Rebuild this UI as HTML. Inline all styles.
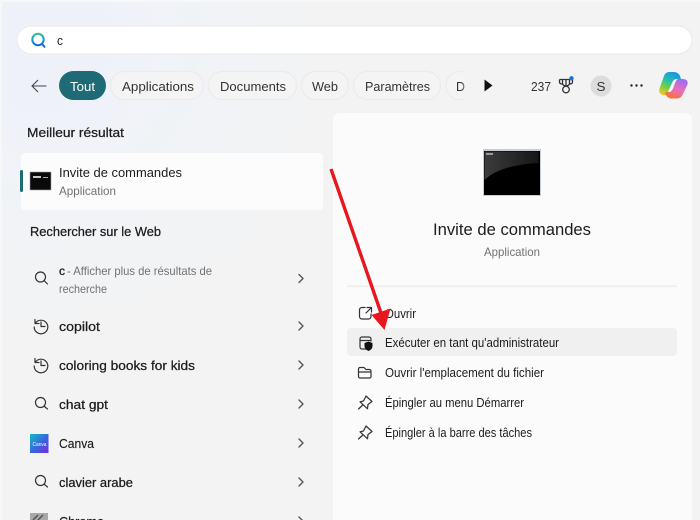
<!DOCTYPE html>
<html lang="fr">
<head>
<meta charset="utf-8">
<title>Recherche</title>
<style>
html,body{margin:0;padding:0;background:#f3f3f3;overflow:hidden;}
svg{display:block;width:700px;height:520px;filter:blur(.3px);}
text{font-family:"Liberation Sans",sans-serif;fill:#1c1c1c;}
.s{font-size:13px;}
.g{font-size:12px;fill:#727272;}
.b{font-size:13px;stroke:#1c1c1c;stroke-width:.25px;}
.i{fill:none;stroke:#333;stroke-width:1.2;stroke-linecap:round;stroke-linejoin:round;}
.c{fill:none;stroke:#555;stroke-width:1.4;stroke-linecap:round;stroke-linejoin:round;}
.p{fill:#f4f4f4;stroke:#ebebeb;stroke-width:1.2;}
</style>
</head>
<body>
<svg xmlns="http://www.w3.org/2000/svg" width="700" height="520" viewBox="0 0 700 520">
<defs>
<radialGradient id="bg" gradientUnits="userSpaceOnUse" cx="40" cy="40" r="300"><stop offset="0" stop-color="#edf2f9"/><stop offset=".6" stop-color="#f1f3f6"/><stop offset="1" stop-color="#f3f3f3"/></radialGradient>
<linearGradient id="q" x1="0" y1="0" x2="0" y2="1"><stop offset="0" stop-color="#2cc08a"/><stop offset=".5" stop-color="#1a9bd8"/><stop offset="1" stop-color="#0f6fd8"/></linearGradient>
<linearGradient id="cv" x1="0" y1="0" x2="1" y2="1"><stop offset="0" stop-color="#12bcc4"/><stop offset=".55" stop-color="#3a63e0"/><stop offset="1" stop-color="#7a2be0"/></linearGradient>
<linearGradient id="fade" x1="0" y1="0" x2="1" y2="0"><stop offset="0" stop-color="#f3f3f3" stop-opacity="0"/><stop offset="1" stop-color="#f3f3f3"/></linearGradient>
<linearGradient id="co1" x1=".7" y1="0" x2=".2" y2="1"><stop offset="0" stop-color="#1f8fe8"/><stop offset=".4" stop-color="#22c0b0"/><stop offset=".7" stop-color="#7fd03c"/><stop offset="1" stop-color="#f7c52b"/></linearGradient>
<linearGradient id="co2" x1=".7" y1="0" x2=".3" y2="1"><stop offset="0" stop-color="#9a6cf0"/><stop offset=".5" stop-color="#ea6cc0"/><stop offset="1" stop-color="#f8742f"/></linearGradient>
<linearGradient id="gl" x1="0" y1="0" x2="1" y2="0"><stop offset="0" stop-color="#3c3c3c"/><stop offset="1" stop-color="#161616"/></linearGradient>
</defs>

<rect width="700" height="520" fill="#f3f3f3"/>
<rect width="700" height="520" fill="url(#bg)"/>
<rect width="700" height="2" fill="#f8f8f8"/>
<rect width="2" height="520" fill="#f7f7f7"/>

<!-- search box -->
<rect x="17" y="26" width="675" height="28" rx="14" fill="#fff" stroke="#e9e9e9"/>
<circle cx="38" cy="39.500" r="5.700" fill="none" stroke="url(#q)" stroke-width="2"/>
<path d="M42 44 L44.500 46.800" stroke="#0f6fd8" stroke-width="2" stroke-linecap="round"/>
<text x="57" y="45" font-size="13" textLength="6" lengthAdjust="spacingAndGlyphs">c</text>

<!-- filter row -->
<path d="M46.500 86 H32 M38 80 L32 86 L38 92" fill="none" stroke="#444" stroke-width="1.100"/>
<rect x="59" y="71" width="47" height="29" rx="14.500" fill="#1f6b75"/>
<text x="70" y="91" class="s" style="fill:#fff" textLength="25" lengthAdjust="spacingAndGlyphs">Tout</text>
<rect x="110.500" y="71.500" width="93" height="28" rx="14" class="p"/>
<text x="122" y="91" class="s" style="fill:#333" textLength="72" lengthAdjust="spacingAndGlyphs">Applications</text>
<rect x="208.500" y="71.500" width="88" height="28" rx="14" class="p"/>
<text x="220" y="91" class="s" style="fill:#333" textLength="66" lengthAdjust="spacingAndGlyphs">Documents</text>
<rect x="301.500" y="71.500" width="47" height="28" rx="14" class="p"/>
<text x="312" y="91" class="s" style="fill:#333" textLength="26" lengthAdjust="spacingAndGlyphs">Web</text>
<rect x="353.500" y="71.500" width="87" height="28" rx="14" class="p"/>
<text x="365" y="91" class="s" style="fill:#333" textLength="65" lengthAdjust="spacingAndGlyphs">Paramètres</text>
<path d="M465 71.500 H460 A14 14 0 0 0 460 99.500 H465" class="p"/>
<text x="456" y="91" class="s" style="fill:#333" textLength="9" lengthAdjust="spacingAndGlyphs">D</text>
<rect x="462" y="70" width="6" height="31" fill="url(#fade)"/>
<path d="M484.500 79.500 L492.500 85.500 L484.500 91.500 Z" fill="#111"/>
<text x="531" y="91" font-size="12.500" style="fill:#333" textLength="20" lengthAdjust="spacingAndGlyphs">237</text>
<!-- trophy -->
<path d="M559.500 79.500 H572 M562.500 79.500 V83 Q562.500 85.800 566 85.800 Q569.500 85.800 569.500 83 V79.500 M566 80 V85 M559.500 79.500 V82 Q559.500 84 562.500 84 M572.500 80 V82 Q572.500 84 569.500 84" fill="none" stroke="#333" stroke-width="1.300"/>
<circle cx="566" cy="89.500" r="3.300" fill="none" stroke="#333" stroke-width="1.300"/>
<circle cx="571.500" cy="78.300" r="2.200" fill="#1a73d8"/>
<circle cx="601" cy="86" r="10.500" fill="#dcdcdc"/>
<text x="596.500" y="91" font-size="13" style="fill:#333" textLength="9" lengthAdjust="spacingAndGlyphs">S</text>
<circle cx="631.500" cy="85.500" r="1.200" fill="#222"/><circle cx="636.500" cy="85.500" r="1.200" fill="#222"/><circle cx="641.500" cy="85.500" r="1.200" fill="#222"/>
<!-- copilot logo -->
<path d="M669 72 H674 Q678 72 680 76 L681 79 H677 Q673.500 79 672 83 L667.500 93 Q666 96 662.500 95 Q658 93.500 659.500 88.500 L664 76 Q665.500 72 669 72 Z" fill="url(#co1)"/>
<path d="M678 79 H683 Q688.500 79.500 687.500 84.500 L683 94 Q681 99 676 98.500 H671 Q667 98 665.500 94 L665 92 H669 Q671.500 92 673 88.500 L675.500 82 Q676.500 79.500 678 79 Z" fill="url(#co2)"/>
<path d="M675.500 80 Q673 81 672 84 L668.500 92 Q670.500 92 672 89 L675 82 Z" fill="#fff"/>

<!-- left column -->
<text x="27" y="137" class="b" textLength="97" lengthAdjust="spacingAndGlyphs">Meilleur résultat</text>
<rect x="21" y="153" width="302" height="57" rx="4" fill="#fcfcfc"/>
<rect x="20" y="170" width="3" height="22" rx="1.500" fill="#1f6b75"/>
<rect x="30" y="172" width="21" height="18" fill="#0a0a0a" stroke="#9aa0a8" stroke-width=".6"/>
<rect x="33" y="176" width="8" height="2" fill="#c8c8c8"/>
<rect x="43" y="177" width="5" height="1" fill="#aaa"/>
<text x="59" y="177" class="s" textLength="123" lengthAdjust="spacingAndGlyphs">Invite de commandes</text>
<text x="59" y="195" class="g" textLength="57" lengthAdjust="spacingAndGlyphs">Application</text>
<text x="30" y="236" class="b" textLength="131" lengthAdjust="spacingAndGlyphs">Rechercher sur le Web</text>

<!-- web rows -->
<circle cx="40.500" cy="277" r="5" class="i"/><path d="M44.500 281 L47.500 284" class="i"/>
<text x="59" y="275" class="g" style="stroke:#1c1c1c;stroke-width:.3px;fill:#1c1c1c" textLength="6" lengthAdjust="spacingAndGlyphs">c</text>
<text x="67" y="275" class="g" textLength="145" lengthAdjust="spacingAndGlyphs">- Afficher plus de résultats de</text>
<text x="59" y="293" class="g" textLength="48" lengthAdjust="spacingAndGlyphs">recherche</text>
<path d="M299 274.500 L303 278.500 L299 282.500" class="c"/>

<!-- history: copilot -->
<path d="M35.500 323 A6.800 6.800 0 1 1 34.200 327 M35 319.500 V323.500 H39 M41 322 V326.500 H45" class="i"/>
<text x="59" y="331" class="b" textLength="41" lengthAdjust="spacingAndGlyphs">copilot</text>
<path d="M299 322 L303 326 L299 330" class="c"/>
<!-- history: coloring -->
<path d="M35.500 362 A6.800 6.800 0 1 1 34.200 366 M35 358.500 V362.500 H39 M41 361 V365.500 H45" class="i"/>
<text x="59" y="370" class="b" textLength="136" lengthAdjust="spacingAndGlyphs">coloring books for kids</text>
<path d="M299 361 L303 365 L299 369" class="c"/>
<!-- chat gpt -->
<circle cx="40.500" cy="402.500" r="5" class="i"/><path d="M44.500 406.500 L47.500 409" class="i"/>
<text x="59" y="409" class="b" textLength="49" lengthAdjust="spacingAndGlyphs">chat gpt</text>
<path d="M299 400 L303 404 L299 408" class="c"/>
<!-- canva -->
<rect x="30" y="434" width="18.500" height="19" fill="url(#cv)"/>
<text x="32.500" y="446" font-size="5" style="fill:#fff" textLength="14" lengthAdjust="spacingAndGlyphs">Canva</text>
<text x="59" y="448" class="s" style="stroke:#1c1c1c;stroke-width:.15px" textLength="35" lengthAdjust="spacingAndGlyphs">Canva</text>
<path d="M299 439 L303 443 L299 447" class="c"/>
<!-- clavier arabe -->
<circle cx="40.500" cy="480.500" r="5" class="i"/><path d="M44.500 484.500 L47.500 487" class="i"/>
<text x="59" y="487" class="b" textLength="74" lengthAdjust="spacingAndGlyphs">clavier arabe</text>
<path d="M299 478 L303 482 L299 486" class="c"/>
<!-- chrome -->
<rect x="30" y="513" width="18" height="8" fill="#a8a8a8"/>
<path d="M33 520 L38 515 M38 520 L43 515" stroke="#555" stroke-width="1.500"/>
<text x="59" y="526" class="s" style="stroke:#1c1c1c;stroke-width:.15px" textLength="45" lengthAdjust="spacingAndGlyphs">Chrome</text>
<path d="M299 517 L303 521 L299 525" class="c"/>

<!-- right panel -->
<path d="M333 520 V119 A6 6 0 0 1 339 113 H686 A6 6 0 0 1 692 119 V520 Z" fill="#fbfbfb"/>
<rect x="483" y="149" width="58" height="47" fill="#c6ccd6"/>
<rect x="484" y="151" width="56" height="44" fill="#000"/>
<path d="M484.500 151.500 H538.500 V163 Q500 165 484.500 180 Z" fill="url(#gl)"/>
<rect x="486" y="153" width="7" height="2" fill="#999"/>
<text x="433" y="235" font-size="17" textLength="158" lengthAdjust="spacingAndGlyphs">Invite de commandes</text>
<text x="484" y="256" class="g" textLength="56" lengthAdjust="spacingAndGlyphs">Application</text>
<rect x="347" y="285.500" width="330" height="1.500" fill="#ededed"/>

<rect x="347" y="328" width="330" height="28" rx="4" fill="#f0f0f0"/>

<path d="M365 307.500 H362 A2.500 2.500 0 0 0 359.500 310 V316.500 A2.500 2.500 0 0 0 362 319 H368.500 A2.500 2.500 0 0 0 371 316.500 V314 M366 313 L371 308 M367 307.500 H371.500 V312" class="i"/>
<text x="385" y="318" font-size="12.500" textLength="31" lengthAdjust="spacingAndGlyphs">Ouvrir</text>

<path d="M366 349 H362 A2 2 0 0 1 360 347 V339 A2 2 0 0 1 362 337 H369 A2 2 0 0 1 371 339 V341 M360 340.500 H371" class="i"/>
<path d="M368.500 341.500 L372.500 343 V346 Q372.500 349.500 368.500 351 Q364.500 349.500 364.500 346 V343 Z" fill="#111"/>
<text x="385" y="347" font-size="12.500" textLength="174" lengthAdjust="spacingAndGlyphs">Exécuter en tant qu'administrateur</text>

<path d="M358.500 369 A1.500 1.500 0 0 1 360 367.500 H364 L366 369.500 H369.500 A1.500 1.500 0 0 1 371 371 V376.500 A1.500 1.500 0 0 1 369.500 378 H360 A1.500 1.500 0 0 1 358.500 376.500 Z M358.500 372 H371" class="i"/>
<text x="385" y="377" font-size="12.500" textLength="159" lengthAdjust="spacingAndGlyphs">Ouvrir l'emplacement du fichier</text>

<path d="M366 396 L372 401.500 L368 404.500 L367.500 408.800 L360 401.800 L363.500 401 Z M362.800 405 L358.500 409" class="i"/>
<text x="385" y="407" font-size="12.500" textLength="139" lengthAdjust="spacingAndGlyphs">Épingler au menu Démarrer</text>

<path d="M366 426 L372 431.500 L368 434.500 L367.500 438.800 L360 431.800 L363.500 431 Z M362.800 435 L358.500 439" class="i"/>
<text x="385" y="437" font-size="12.500" textLength="147" lengthAdjust="spacingAndGlyphs">Épingler à la barre des tâches</text>

<!-- red arrow -->
<path d="M331 169 L381 313" stroke="#e8171d" stroke-width="3.400" fill="none"/>
<path d="M371.500 315 L390.500 308.500 L384.500 330 Z" fill="#e8171d"/>
</svg>
</body>
</html>
